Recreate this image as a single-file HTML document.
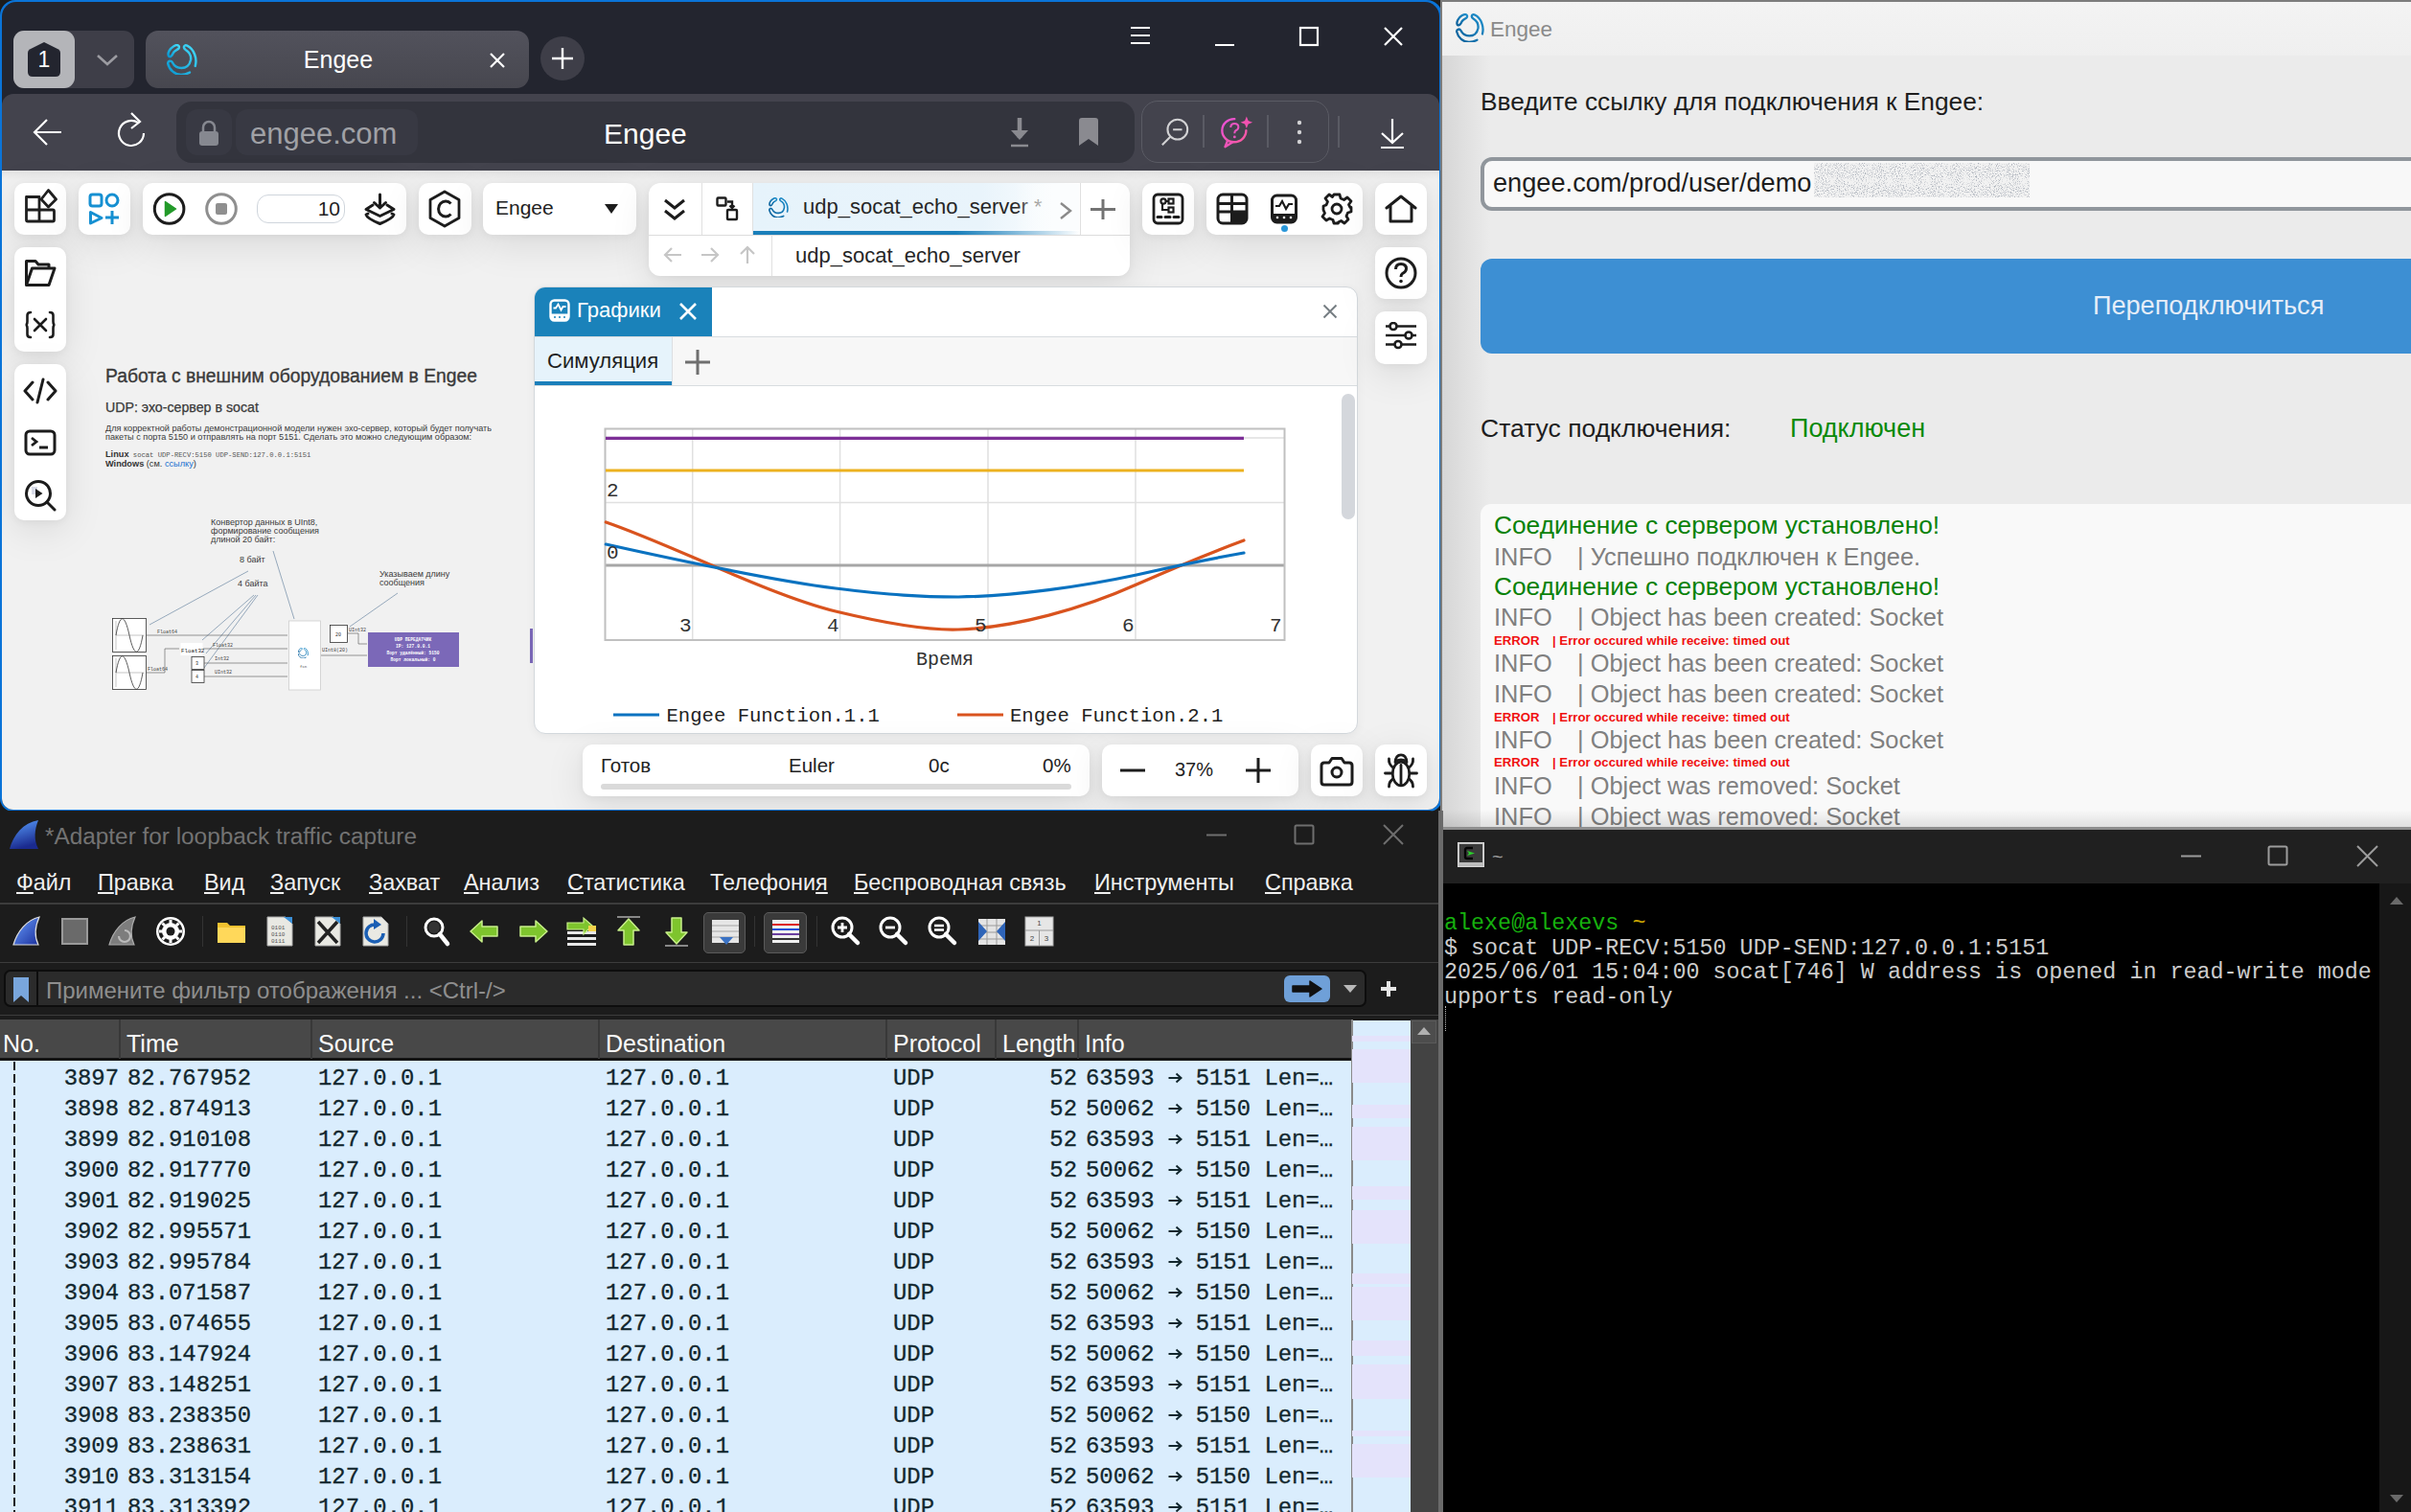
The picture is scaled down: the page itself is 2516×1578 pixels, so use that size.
<!DOCTYPE html>
<html><head><meta charset="utf-8">
<style>
*{margin:0;padding:0;box-sizing:border-box}
html,body{width:2516px;height:1578px;overflow:hidden;background:#1c1c1c;font-family:"Liberation Sans",sans-serif}
.a{position:absolute}
.mono{font-family:"Liberation Mono",monospace}
.ws{-webkit-text-stroke:0.3px #12272e}
.nw{white-space:nowrap}
.wbox{position:absolute;background:#fff;border-radius:10px;box-shadow:0 10px 40px rgba(0,0,0,0.10),0 2px 8px rgba(0,0,0,0.05)}
</style></head><body>

<!-- ============ BROWSER ============ -->
<div id="browser" class="a" style="left:0;top:0;width:1505px;height:847px;background:#0a74d8;border-radius:16px 16px 14px 14px;overflow:hidden">
  <div class="a" style="left:2px;top:2px;width:1500px;height:843px;background:#23252f;border-radius:15px 15px 12px 12px;overflow:hidden"><div class="a" style="left:-2px;top:-2px;width:1505px;height:847px">

    <!-- tab bar -->
    <svg width="0" height="0" style="position:absolute"><defs>
      <linearGradient id="lg1" x1="0" y1="1" x2="1" y2="0"><stop offset="0" stop-color="#0896d0"/><stop offset="1" stop-color="#45dcfa"/></linearGradient>
      <linearGradient id="lg2" x1="0" y1="1" x2="1" y2="0"><stop offset="0" stop-color="#0d5f99"/><stop offset="1" stop-color="#1d8fcc"/></linearGradient>
      <symbol id="elogo" viewBox="0 0 32 32" overflow="visible"><g fill="none" stroke-width="2.3" stroke-linecap="round" stroke-linejoin="round" transform="translate(16 16) scale(1.06) translate(-16 -16)">
        <path d="M2.8 12.8 C1.2 10 4 5.2 7.8 3 C11 1 14 2.2 12.8 5 C12.2 6.2 9.2 6.8 7.6 9.2 C6.4 11.8 4.6 14.6 2.8 12.8 Z"/>
        <path d="M29 22.5 C31 15 28 6 21 2.5 C18 1 16.5 4.5 19.5 6.5 C23.5 9 25 13 24.5 16.5 C23.5 22 19.5 24.5 15.5 24.5 C11 24.5 8 22 6.5 19 C5 16.5 2 17.5 2 20 C3.5 26.5 9 31 15 31 C18.5 31 21 30 23.5 28.8"/>
      </g></symbol>
    </defs></svg>
    <div class="a" style="left:14px;top:32px;width:126px;height:60px;background:#3e3e48;border-radius:11px"></div>
    <div class="a" style="left:14px;top:32px;width:64px;height:60px;background:#b4b5b9;border-radius:11px"></div>
    <svg class="a" style="left:28px;top:43px" width="36" height="38" viewBox="0 0 36 38"><path d="M18 1 L33 8.5 Q35 9.5 35 12 L35 32 Q35 37 30 37 L6 37 Q1 37 1 32 L1 12 Q1 9.5 3 8.5 Z" fill="#23252f"/><text x="18" y="27" text-anchor="middle" font-family="Liberation Sans" font-size="23" fill="#fff">1</text></svg>
    <svg class="a" style="left:99px;top:55px" width="26" height="16" viewBox="0 0 26 16"><path d="M3 3 L13 12 L23 3" stroke="#9b9ba1" stroke-width="2.6" fill="none"/></svg>
    <div class="a" style="left:152px;top:32px;width:400px;height:60px;background:linear-gradient(#52525c,#47474f);border-radius:13px"></div>
    <svg class="a" style="left:174px;top:46px;stroke:url(#lg1)" width="32" height="32"><use href="#elogo"/></svg>
    <div class="a nw" style="left:272px;top:47px;width:162px;text-align:center;font-size:25px;line-height:30px;color:#fff">Engee</div>
    <svg class="a" style="left:509px;top:53px" width="20" height="20" viewBox="0 0 20 20"><path d="M3 3 L17 17 M17 3 L3 17" stroke="#fff" stroke-width="2.2"/></svg>
    <div class="a" style="left:564px;top:38px;width:46px;height:46px;background:#3e3e48;border-radius:50%"></div>
    <svg class="a" style="left:575px;top:49px" width="24" height="24" viewBox="0 0 24 24"><path d="M12 1 V23 M1 12 H23" stroke="#fff" stroke-width="2.4"/></svg>
    <!-- window controls -->
    <svg class="a" style="left:1178px;top:26px" width="24" height="22" viewBox="0 0 24 22"><path d="M2 3 H22 M2 11 H22 M2 19 H22" stroke="#fff" stroke-width="2"/></svg>
    <svg class="a" style="left:1266px;top:40px" width="24" height="10" viewBox="0 0 24 10"><path d="M2 7 H22" stroke="#fff" stroke-width="2.2"/></svg>
    <svg class="a" style="left:1354px;top:26px" width="24" height="24" viewBox="0 0 24 24"><rect x="3" y="3" width="18" height="18" stroke="#fff" stroke-width="2.2" fill="none"/></svg>
    <svg class="a" style="left:1442px;top:26px" width="24" height="24" viewBox="0 0 24 24"><path d="M3 3 L21 21 M21 3 L3 21" stroke="#fff" stroke-width="2.2"/></svg>


    <!-- address row -->
    <div class="a" style="left:2px;top:98px;width:1500px;height:80px;background:#43434d;border-radius:12px 12px 0 0"></div>
    <svg class="a" style="left:32px;top:122px" width="34" height="32" viewBox="0 0 34 32"><path d="M4 16 H32 M17 3 L4 16 L17 29" stroke="#fff" stroke-width="2.2" fill="none"/></svg>
    <svg class="a" style="left:120px;top:116px" width="36" height="40" viewBox="0 0 36 40"><path d="M24 10 A13 13 0 1 0 30 21" stroke="#fff" stroke-width="2.2" fill="none" transform="translate(0,2)"/><path d="M17 2 L26 11 L17 18" stroke="#fff" stroke-width="2.2" fill="none"/></svg>
    <div class="a" style="left:184px;top:106px;width:1000px;height:64px;background:#33343d;border-radius:16px"></div>
    <div class="a" style="left:194px;top:114px;width:48px;height:48px;background:#383943;border-radius:12px"></div>
    <svg class="a" style="left:206px;top:124px" width="24" height="30" viewBox="0 0 24 30"><path d="M6 13 V9 A6 6 0 0 1 18 9 V13" stroke="#868890" stroke-width="2.5" fill="none"/><rect x="2" y="13" width="20" height="15" rx="3" fill="#868890"/></svg>
    <div class="a" style="left:246px;top:114px;width:190px;height:48px;background:#383943;border-radius:12px"></div>
    <div class="a nw" style="left:261px;top:122px;font-size:31px;line-height:36px;color:#a0a1a6">engee.com</div>
    <div class="a nw" style="left:630px;top:122px;font-size:30px;line-height:36px;color:#fff">Engee</div>
    <svg class="a" style="left:1050px;top:120px" width="28" height="36" viewBox="0 0 28 36"><path d="M14 3 V24" stroke="#8a8a90" stroke-width="4.5"/><path d="M5 16 L14 26 L23 16 Z" fill="#8a8a90"/><path d="M5 32 H23" stroke="#8a8a90" stroke-width="2.5"/></svg>
    <svg class="a" style="left:1123px;top:122px" width="26" height="32" viewBox="0 0 26 32"><path d="M3 4 Q3 1 6 1 H20 Q23 1 23 4 V30 L13 23 L3 30 Z" fill="#8a8a90"/></svg>
    <div class="a" style="left:1191px;top:105px;width:196px;height:65px;border:1.5px solid #5a5b64;border-radius:17px"></div>
    <svg class="a" style="left:1210px;top:122px" width="32" height="32" viewBox="0 0 34 34"><circle cx="20" cy="14" r="11" stroke="#d2d2d4" stroke-width="2.2" fill="none"/><path d="M15 14 H25 M12 22 L3 31" stroke="#d2d2d4" stroke-width="2.2"/></svg>
    <div class="a" style="left:1255px;top:120px;width:1.5px;height:34px;background:#5a5b64"></div>
    <svg class="a" style="left:1273px;top:121px" width="36" height="34" viewBox="0 0 40 38"><defs><linearGradient id="aig" x1="0" y1="0" x2="1" y2="1"><stop offset="0" stop-color="#e650d8"/><stop offset="1" stop-color="#ff5aa0"/></linearGradient></defs><path d="M30.5 17 A14 13.5 0 1 1 17 3.5" fill="none" stroke="url(#aig)" stroke-width="2.6" stroke-linecap="round"/><path d="M9 28.5 L6 36 L15 30.5" fill="none" stroke="#ee55b8" stroke-width="2.6" stroke-linejoin="round"/><path d="M12.5 13.5 Q12.5 9 17 9 Q21.5 9 21.5 13 Q21.5 15.5 18.5 17 Q17 18 17 20.5" fill="none" stroke="#e855c0" stroke-width="2.3"/><circle cx="17" cy="24.5" r="1.6" fill="#e855c0"/><path d="M31 0.5 L33 5.5 L38 7.5 L33 9.5 L31 14.5 L29 9.5 L24 7.5 L29 5.5 Z" fill="#f052b0"/></svg>
    <div class="a" style="left:1322px;top:120px;width:1.5px;height:34px;background:#5a5b64"></div>
    <svg class="a" style="left:1350px;top:122px" width="12" height="32" viewBox="0 0 12 32"><circle cx="6" cy="6" r="2.2" fill="#d2d2d4"/><circle cx="6" cy="16" r="2.2" fill="#d2d2d4"/><circle cx="6" cy="26" r="2.2" fill="#d2d2d4"/></svg>
    <div class="a" style="left:1396px;top:121px;width:1.5px;height:33px;background:#5a5b64"></div>
    <svg class="a" style="left:1438px;top:122px" width="30" height="34" viewBox="0 0 30 34"><path d="M15 2 V27 M4 17 L15 27 L26 17" stroke="#fff" stroke-width="2.2" fill="none"/><path d="M3 32 H27" stroke="#fff" stroke-width="2.2"/></svg>

    <!-- app content -->
    <div id="app" class="a" style="left:2px;top:178px;width:1500px;height:667px;background:#f1f1f1"></div>
    <!-- top shadow under address bar -->
    <div class="a" style="left:2px;top:178px;width:1500px;height:10px;background:linear-gradient(rgba(0,0,0,0.06),rgba(0,0,0,0))"></div>
    <!-- toolbar boxes -->
    <div class="wbox" style="left:15px;top:191px;width:54px;height:54px"></div>
    <svg class="a" style="left:25px;top:197px" width="36" height="36" viewBox="0 0 36 36"><g fill="none" stroke="#1f1f1f" stroke-width="2.8" stroke-linejoin="round"><path d="M2.5 8.5 H16 V22 H2.5 Z M2.5 22 H16 V34 H4 Q2.5 34 2.5 32.5 Z M16 22 H30 Q31.5 22 31.5 23.5 V32.5 Q31.5 34 30 34 H16 Z"/><path d="M25.5 1.5 L33.5 11 L25.5 19 L18 11 Z"/></g></svg>
    <div class="wbox" style="left:82px;top:191px;width:54px;height:54px"></div>
    <svg class="a" style="left:92px;top:201px" width="34" height="34" viewBox="0 0 34 34"><g fill="none" stroke="#1690d2" stroke-width="3"><rect x="2" y="2" width="12" height="12" rx="2.5"/><circle cx="25" cy="8" r="6"/><path d="M2.5 20.5 V32 L14 26.5 Z" stroke-linejoin="round"/><path d="M25 19 V33 M18 26 H32"/></g></svg>
    <div class="wbox" style="left:149px;top:191px;width:275px;height:54px"></div>
    <svg class="a" style="left:159px;top:200px" width="36" height="36" viewBox="0 0 36 36"><circle cx="17.6" cy="18" r="15.3" stroke="#1c1c1c" stroke-width="3" fill="none"/><path d="M13.5 10.5 L24.5 18 L13.5 25.5 Z" fill="#239a2a" stroke="#239a2a" stroke-width="1.5" stroke-linejoin="round"/></svg>
    <svg class="a" style="left:213px;top:200px" width="36" height="36" viewBox="0 0 36 36"><circle cx="18" cy="18" r="15.3" stroke="#8f8f8f" stroke-width="3" fill="none"/><rect x="12" y="12" width="12" height="12" rx="2" fill="#8f8f8f"/></svg>
    <div class="a" style="left:268px;top:203px;width:92px;height:30px;border:1px solid #cfd5dc;border-radius:12px"></div>
    <div class="a nw" style="left:268px;top:205px;width:87px;text-align:right;font-size:21px;line-height:26px;color:#222">10</div>
    <svg class="a" style="left:379px;top:201px" width="36" height="36" viewBox="0 0 36 36"><g fill="none" stroke="#1c1c1c" stroke-width="3" stroke-linejoin="round" stroke-linecap="round"><path d="M17.5 2 V16 M11.5 10.5 L17.5 16 L23.5 10.5"/><path d="M10 13 L3 17.5 L17.5 24.5 L32 17.5 L25 13"/><path d="M5 22 L3 23 Q4 27 17.5 32.5 Q31 27 32 23 L30 22"/></g></svg>
    <div class="wbox" style="left:437px;top:191px;width:55px;height:54px"></div>
    <svg class="a" style="left:445px;top:198px" width="38" height="40" viewBox="0 0 38 40"><path d="M19 2 L34 10.5 V29.5 L19 38 L4 29.5 V10.5 Z" fill="none" stroke="#1c1c1c" stroke-width="2.8" stroke-linejoin="round"/><path d="M25.5 14.5 A7.5 8 0 1 0 25.5 25.5" fill="none" stroke="#1c1c1c" stroke-width="3"/></svg>
    <div class="wbox" style="left:504px;top:191px;width:160px;height:54px"></div>
    <div class="a nw" style="left:517px;top:204px;font-size:21px;line-height:26px;color:#222">Engee</div>
    <svg class="a" style="left:630px;top:212px" width="16" height="12" viewBox="0 0 16 12"><path d="M1 1 H15 L8 11 Z" fill="#1c1c1c"/></svg>
    <!-- tabs box -->
    <div class="wbox" style="left:677px;top:191px;width:502px;height:97px;border-radius:12px;overflow:hidden">
      <div class="a" style="left:109px;top:0;width:341px;height:54px;background:linear-gradient(90deg,#e6f3fb 0%,#e9f4fb 70%,#ffffff 100%)"></div>
      <div class="a" style="left:109px;top:50px;width:341px;height:4px;background:linear-gradient(90deg,#1a7fba 0%,#1a7fba 62%,rgba(26,127,186,0) 100%)"></div>
      <div class="a" style="left:0;top:54px;width:502px;height:1px;background:#dcdcdc"></div>
      <div class="a" style="left:55px;top:0;width:1px;height:54px;background:#e0e0e0"></div>
      <div class="a" style="left:108px;top:0;width:1px;height:54px;background:#e0e0e0"></div>
      <div class="a" style="left:450px;top:0;width:1px;height:54px;background:#e0e0e0"></div>
      <div class="a" style="left:128px;top:54px;width:1px;height:43px;background:#e0e0e0"></div>
    </div>
    <svg class="a" style="left:691px;top:206px" width="26" height="26" viewBox="0 0 26 26"><path d="M3 3 L13 11 L23 3 M3 14 L13 22 L23 14" fill="none" stroke="#1c1c1c" stroke-width="3"/></svg>
    <svg class="a" style="left:747px;top:205px" width="24" height="26" viewBox="0 0 24 26"><g fill="none" stroke="#1c1c1c" stroke-width="2.4"><rect x="1.5" y="1.5" width="9" height="8" rx="1"/><rect x="12" y="14" width="10" height="10" rx="1"/><path d="M12 5.5 H17 V12 M14.5 9.5 L17 12 L19.5 9.5"/></g></svg>
    <svg class="a" style="left:802px;top:206px;stroke:url(#lg2)" width="21" height="21"><use href="#elogo"/></svg>
    <div class="a nw" style="left:838px;top:203px;font-size:22px;line-height:26px;color:#262626">udp_socat_echo_server <span style="color:#333">*</span></div>
    <div class="a" style="left:1060px;top:192px;width:66px;height:48px;background:linear-gradient(90deg,rgba(248,252,254,0),#fbfdfe 60%)"></div>
    <svg class="a" style="left:1102px;top:209px" width="20" height="22" viewBox="0 0 20 22"><path d="M5 3 L15 11 L5 19" fill="none" stroke="#8a8a8a" stroke-width="2.4"/></svg>
    <svg class="a" style="left:1137px;top:207px" width="28" height="24" viewBox="0 0 28 22"><path d="M14 0 V21 M1 10.5 H27" stroke="#737373" stroke-width="3"/></svg>
    <svg class="a" style="left:691px;top:255px" width="22" height="22" viewBox="0 0 22 22"><path d="M20 11 H3 M10 4 L3 11 L10 18" fill="none" stroke="#c6c6c6" stroke-width="2.2"/></svg>
    <svg class="a" style="left:730px;top:255px" width="22" height="22" viewBox="0 0 22 22"><path d="M2 11 H19 M12 4 L19 11 L12 18" fill="none" stroke="#c6c6c6" stroke-width="2.2"/></svg>
    <svg class="a" style="left:769px;top:255px" width="22" height="22" viewBox="0 0 22 22"><path d="M11 20 V3 M4 10 L11 3 L18 10" fill="none" stroke="#c6c6c6" stroke-width="2.2"/></svg>
    <div class="a nw" style="left:830px;top:253.5px;font-size:22px;line-height:26px;color:#262626">udp_socat_echo_server</div>
    <!-- canvas text -->
    <div class="a nw" style="left:110px;top:381px;font-size:19.3px;line-height:24px;color:#3a3a3a;-webkit-text-stroke:0.35px #3a3a3a">Работа с внешним оборудованием в Engee</div>
    <div class="a nw" style="left:110px;top:416px;font-size:14.2px;line-height:18px;color:#3a3a3a;-webkit-text-stroke:0.25px #3a3a3a">UDP: эхо-сервер в socat</div>
    <div class="a nw" style="left:110px;top:443px;font-size:9.15px;line-height:9px;color:#3a3a3a">Для корректной работы демонстрационной модели нужен эхо-сервер, который будет получать<br>пакеты с порта 5150 и отправлять на порт 5151. Сделать это можно следующим образом:</div>
    <div class="a nw" style="left:110px;top:470px;font-size:9.2px;line-height:8.8px;color:#333"><b>Linux</b><span class="mono" style="font-size:7.2px;color:#555">&nbsp;socat UDP-RECV:5150 UDP-SEND:127.0.0.1:5151</span><br><b>Windows</b> (см. <span style="color:#1a6fd0">ссылку</span>)</div>
    <!-- diagram -->
    <svg class="a" style="left:100px;top:530px" width="460" height="200" viewBox="100 530 460 200">
      <g font-family="Liberation Sans" font-size="9" fill="#3a3a3a">
        <text x="220" y="548">Конвертор данных в UInt8,</text>
        <text x="220" y="557">формирование сообщения</text>
        <text x="220" y="566">длиной 20 байт:</text>
        <text x="250" y="587">8 байт</text>
        <text x="248" y="612">4 байта</text>
        <text x="396" y="602">Указываем длину</text>
        <text x="396" y="611">сообщения</text>
      </g>
      <g stroke="#7d96ad" stroke-width="0.8" fill="none">
        <path d="M259 596 L156 652"/>
        <path d="M265 621 L211 668 M267 621 L215 682 M269 621 L213 697"/>
        <path d="M285 575 L307 646"/>
        <path d="M415 619 L365 654"/>
      </g>
      <g fill="#fff" stroke="#333" stroke-width="0.8">
        <rect x="117.5" y="645.5" width="35" height="35"/>
        <rect x="117.5" y="684.5" width="35" height="35"/>
        <rect x="188.5" y="671" width="23" height="13" stroke="none"/>
        <rect x="200" y="685.5" width="13" height="13"/>
        <rect x="200" y="699.5" width="13" height="13"/>
        <rect x="301.5" y="648" width="33" height="72" stroke="#ccc"/>
        <rect x="344.5" y="652.5" width="18" height="18"/>
      </g>
      <g stroke="#888" stroke-width="0.5"><path d="M121 663 H150 M121 702 H150"/><path d="M121 648 V678 M121 687 V717"/></g>
      <path d="M121 663 C125 640 130 640 135 663 C140 686 145 686 149 663" stroke="#333" stroke-width="0.8" fill="none"/>
      <path d="M121 702 C125 679 130 679 135 702 C140 725 145 725 149 702" stroke="#333" stroke-width="0.8" fill="none"/>
      <g stroke="#555" stroke-width="0.6" fill="none">
        <path d="M153 663 H300"/><path d="M212 677 H300"/><path d="M213 692 H300"/><path d="M213 706 H300"/>
        <path d="M153 702 H172 V677 H187"/><path d="M335 684 H383"/><path d="M363 661 H374 V672 H383"/>
      </g>
      <rect x="384" y="660" width="95" height="36" fill="#7b68b8"/>
      <g font-family="Liberation Mono" font-size="4.6" fill="#fff" text-anchor="middle" font-weight="bold">
        <text x="431" y="669">UDP ПЕРЕДАТЧИК</text><text x="431" y="676">IP: 127.0.0.1</text><text x="431" y="683">Порт удалённый: 5150</text><text x="431" y="690">Порт локальный: 0</text>
      </g>
      <g font-family="Liberation Mono" font-size="5" fill="#444">
        <text x="164" y="661">Float64</text><text x="222" y="675">Float32</text><text x="224" y="689">Int32</text><text x="224" y="703">UInt32</text>
        <text x="154" y="700">Float64</text><text x="336" y="680">UInt8(20)</text><text x="364" y="659">UInt32</text>
        <text x="189" y="681" font-size="5.8" fill="#222">Float32</text><text x="204" y="694" fill="#333">3</text><text x="204" y="708" fill="#333">4</text><text x="350" y="664" fill="#333">20</text>
        <text x="313" y="697" font-size="4">fcn</text>
      </g>
      <svg x="311" y="676" width="11" height="11" style="stroke:url(#lg2)"><use href="#elogo"/></svg>
      <rect x="553" y="656" width="3" height="36" fill="#7b68b8"/>
    </svg>
    <!-- graphs panel -->
    <div class="a" style="left:557px;top:299px;width:860px;height:467px;background:#fff;border:1px solid #d3d8dc;border-radius:12px;box-shadow:0 2px 10px rgba(0,0,0,0.05);overflow:hidden">
      <div class="a" style="left:-1px;top:-1px;width:186px;height:52px;background:#1a82ba"></div>
      <div class="a" style="left:-1px;top:51px;width:859px;height:1px;background:#d8dcdf"></div>
      <div class="a" style="left:-1px;top:52px;width:859px;height:50px;background:#f7f7f7"></div>
      <div class="a" style="left:-1px;top:52px;width:145px;height:50px;background:#e6f3fb"></div>
      <div class="a" style="left:-1px;top:98px;width:145px;height:4px;background:#1a7fba"></div>
      <div class="a" style="left:143px;top:52px;width:1px;height:50px;background:#dcdfe2"></div>
      <div class="a" style="left:-1px;top:102px;width:859px;height:1px;background:#d8dcdf"></div>
      <div class="a" style="left:842px;top:111px;width:14px;height:131px;background:#d4d7dc;border-radius:7px"></div>
    </div>
    <svg class="a" style="left:573px;top:312px" width="22" height="24" viewBox="0 0 22 24"><rect x="1.5" y="1.5" width="19" height="21" rx="4" fill="none" stroke="#fff" stroke-width="2.4"/><path d="M1.5 15.5 H20.5 V19 Q20.5 22.5 17 22.5 H5 Q1.5 22.5 1.5 19 Z" fill="#fff"/><path d="M4.5 9.5 H7 L9.5 5.5 L12.5 11.5 L14.5 8 H17.5" fill="none" stroke="#fff" stroke-width="1.8"/><circle cx="6" cy="19" r="1" fill="#1a82ba"/><circle cx="11" cy="19" r="1" fill="#1a82ba"/><circle cx="16" cy="19" r="1" fill="#1a82ba"/></svg>
    <div class="a nw" style="left:602px;top:311px;font-size:22.1px;line-height:26px;color:#fff">Графики</div>
    <svg class="a" style="left:708px;top:315px" width="20" height="20" viewBox="0 0 20 20"><path d="M2 2 L18 18 M18 2 L2 18" stroke="#fff" stroke-width="2.6"/></svg>
    <svg class="a" style="left:1380px;top:317px" width="16" height="16" viewBox="0 0 16 16"><path d="M1.5 1.5 L14.5 14.5 M14.5 1.5 L1.5 14.5" stroke="#737b80" stroke-width="1.8"/></svg>
    <div class="a nw" style="left:571px;top:364px;font-size:22.1px;line-height:26px;color:#1f1f1f">Симуляция</div>
    <svg class="a" style="left:714px;top:364px" width="28" height="28" viewBox="0 0 28 28"><path d="M14 1 V27 M1 14 H27" stroke="#6f6f6f" stroke-width="3"/></svg>
    <!-- plot -->
    <svg class="a" style="left:620px;top:440px" width="740" height="320" viewBox="620 440 740 320">
      <g stroke="#e0e0e0" stroke-width="1.5"><path d="M722.7 447 V668 M876.6 447 V668 M1031 447 V668 M1185 447 V668 M631 457 H1341 M631 524.5 H1341"/></g>
      <path d="M631 590 H1341" stroke="#a6a6a6" stroke-width="3"/>
      <rect x="631.5" y="447.5" width="709" height="220.5" fill="none" stroke="#c0c0c0" stroke-width="2"/>
      <path d="M632 457.3 H1298" stroke="#7d2f97" stroke-width="3.2"/>
      <path d="M632 491 H1298" stroke="#ecb120" stroke-width="3.2"/>
      <path d="M632.3 545 C 700 568, 800 620, 872 638 C 930 652, 970 658, 1000 657 C 1060 655, 1130 635, 1186 610 C 1220 595, 1260 578, 1298 564" fill="none" stroke="#d9531e" stroke-width="3.2" stroke-linecap="round"/>
      <path d="M632.3 568 C 700 583, 800 605, 872 614 C 930 621, 960 623, 1000 623 C 1060 622, 1130 612, 1186 600 C 1230 590, 1270 582, 1298 577" fill="none" stroke="#0a72c0" stroke-width="3.2" stroke-linecap="round"/>
      <g font-family="Liberation Mono" font-size="21" fill="#333">
        <text x="633" y="517.5">2</text><text x="633" y="583">0</text>
        <text x="709" y="658.5">3</text><text x="863" y="658.5">4</text><text x="1017" y="658.5">5</text><text x="1171" y="658.5">6</text><text x="1325" y="658.5">7</text>
        <text x="956" y="694" font-size="20">Время</text>
      </g>
      <path d="M640 746 H688" stroke="#0a72c0" stroke-width="3"/>
      <path d="M999 746 H1047" stroke="#d9531e" stroke-width="3"/>
      <g font-family="Liberation Mono" font-size="20.6" fill="#222"><text x="695.5" y="753">Engee Function.1.1</text><text x="1054" y="753">Engee Function.2.1</text></g>
    </svg>
    <!-- status bar -->
    <div class="wbox" style="left:608px;top:777px;width:529px;height:54px"></div>
    <div class="a nw" style="left:627px;top:786px;font-size:20.5px;line-height:26px;color:#222">Готов</div>
    <div class="a nw" style="left:823px;top:786px;font-size:20.5px;line-height:26px;color:#222">Euler</div>
    <div class="a nw" style="left:969px;top:786px;font-size:20.5px;line-height:26px;color:#222">0с</div>
    <div class="a nw" style="left:1088px;top:786px;font-size:20.5px;line-height:26px;color:#222">0%</div>
    <div class="a" style="left:627px;top:818px;width:491px;height:6px;background:#dadada;border-radius:3px"></div>
    <div class="wbox" style="left:1150px;top:777px;width:205px;height:54px"></div>
    <svg class="a" style="left:1168px;top:796px" width="28" height="16" viewBox="0 0 28 16"><path d="M1 8 H27" stroke="#1c1c1c" stroke-width="3"/></svg>
    <div class="a nw" style="left:1226px;top:790px;font-size:20px;line-height:26px;color:#222">37%</div>
    <svg class="a" style="left:1299px;top:790px" width="28" height="28" viewBox="0 0 28 28"><path d="M14 1 V27 M1 14 H27" stroke="#1c1c1c" stroke-width="3"/></svg>
    <div class="wbox" style="left:1368px;top:777px;width:54px;height:54px"></div>
    <svg class="a" style="left:1376px;top:789px" width="38" height="32" viewBox="0 0 38 32"><path d="M3 10 Q3 7 6 7 H11 L14 2.5 H24 L27 7 H32 Q35 7 35 10 V27 Q35 30 32 30 H6 Q3 30 3 27 Z" fill="none" stroke="#1c1c1c" stroke-width="3" stroke-linejoin="round"/><circle cx="19" cy="17" r="5" fill="none" stroke="#1c1c1c" stroke-width="3"/></svg>
    <div class="wbox" style="left:1435px;top:777px;width:54px;height:54px"></div>
    <svg class="a" style="left:1443px;top:786px" width="38" height="38" viewBox="0 0 38 38"><g fill="none" stroke="#1c1c1c" stroke-width="2.8" stroke-linecap="round"><ellipse cx="19" cy="21.5" rx="8.8" ry="12.3"/><path d="M13 9.5 Q13.5 1.8 19 1.8 Q24.5 1.8 25 9.5"/><path d="M13.5 8.5 Q19 5.5 24.5 8.5"/><path d="M19 12.5 V33"/><path d="M6.5 6 Q6 11 10 14.5"/><path d="M31.5 6 Q32 11 28 14.5"/><path d="M2.5 21 H10"/><path d="M28 21 H35.5"/><path d="M6.5 35 Q6.5 30 10 27.5"/><path d="M31.5 35 Q31.5 30 28 27.5"/></g></svg>
    <!-- right toolbar -->
    <div class="wbox" style="left:1192px;top:191px;width:54px;height:54px"></div>
    <svg class="a" style="left:1202px;top:201px" width="34" height="34" viewBox="0 0 34 34"><g fill="none" stroke="#1c1c1c" stroke-width="2.8"><rect x="2" y="2" width="30" height="30" rx="4"/><circle cx="12" cy="9" r="2.6" stroke-width="2.2"/><rect x="17.5" y="6.5" width="5" height="5" stroke-width="2.2"/><rect x="17.5" y="15.5" width="5" height="5" stroke-width="2.2"/><path d="M14.5 9 H17.5 M11 11.5 V18 H17.5" stroke-width="2.2"/><path d="M6 25.5 H10 M14 25.5 H19 M23 25.5 H28" stroke-width="3" stroke-linecap="round"/></g></svg>
    <div class="wbox" style="left:1259px;top:191px;width:163px;height:54px"></div>
    <svg class="a" style="left:1269px;top:201px" width="34" height="34" viewBox="0 0 34 34"><rect x="2" y="2" width="30" height="30" rx="5" fill="none" stroke="#1c1c1c" stroke-width="3"/><path d="M2 11.5 H32 M2 20 H32 M16.5 2 V32" stroke="#1c1c1c" stroke-width="3"/><path d="M16.5 20 H32 V27 Q32 32 27 32 H16.5 Z" fill="#1c1c1c"/></svg>
    <svg class="a" style="left:1325px;top:202px" width="30" height="32" viewBox="0 0 30 32"><rect x="2.5" y="2" width="25" height="28" rx="5" fill="none" stroke="#1c1c1c" stroke-width="3"/><path d="M2.5 21 H27.5 V25 Q27.5 30 22.5 30 H7.5 Q2.5 30 2.5 25 Z" fill="#1c1c1c"/><path d="M6 13 L10 13 L13 8 L17 16 L20 11 H24" fill="none" stroke="#1c1c1c" stroke-width="2.2"/><circle cx="8" cy="25" r="1.3" fill="#fff"/><circle cx="15" cy="25" r="1.3" fill="#fff"/><circle cx="22" cy="25" r="1.3" fill="#fff"/></svg>
    <div class="a" style="left:1337px;top:235px;width:7px;height:7px;border-radius:50%;background:#2a97d9"></div>
    <svg class="a" style="left:1378px;top:201px" width="34" height="34" viewBox="0 0 34 34"><g transform="translate(17 17)"><path d="M-3 -15 H3 L4 -11 L7.5 -9.5 L11 -12 L15 -8 L12.5 -4.5 L14 -1.5 L15 -1.5 V 3 L11.5 4 L10 7.5 L12 11 L8 15 L4.5 12.5 L1.5 14 L1.5 15 H-3 L-4 11.5 L-7.5 10 L-11 12 L-15 8 L-12.5 4.5 L-14 1 V-3 L-11 -4 L-9.5 -7.5 L-12 -11 L-8 -15 L-4.5 -12.5 Z" fill="none" stroke="#1c1c1c" stroke-width="2.8" stroke-linejoin="round"/><circle r="5" fill="none" stroke="#1c1c1c" stroke-width="2.8"/></g></svg>
    <div class="wbox" style="left:1435px;top:191px;width:54px;height:54px"></div>
    <svg class="a" style="left:1445px;top:202px" width="34" height="32" viewBox="0 0 34 32"><path d="M2 15 L17 3 L32 15 M6 13 V29 H28 V13" fill="none" stroke="#1c1c1c" stroke-width="3" stroke-linejoin="round" stroke-linecap="round"/></svg>
    <div class="wbox" style="left:1435px;top:258px;width:54px;height:54px"></div>
    <svg class="a" style="left:1445px;top:268px" width="34" height="34" viewBox="0 0 34 34"><circle cx="17" cy="17" r="15" fill="none" stroke="#1c1c1c" stroke-width="3"/><path d="M11.5 13 Q11.5 7.5 17 7.5 Q22.5 7.5 22.5 12.5 Q22.5 15.5 18.5 17.5 Q17 18.5 17 21" fill="none" stroke="#1c1c1c" stroke-width="3"/><circle cx="17" cy="25.5" r="1.8" fill="#1c1c1c"/></svg>
    <div class="wbox" style="left:1435px;top:325px;width:54px;height:55px"></div>
    <svg class="a" style="left:1444px;top:336px" width="36" height="34" viewBox="0 0 36 34"><g fill="none" stroke="#1c1c1c" stroke-width="2.6"><path d="M2 4.5 H6.5 M14 4.5 H34 M2 14 H22 M29.5 14 H34 M2 23.5 H11 M18.5 23.5 H34"/><circle cx="10" cy="4.5" r="3.5"/><circle cx="26" cy="14" r="3.5"/><circle cx="15" cy="23.5" r="3.5"/></g></svg>
    <!-- left sidebar -->
    <div class="wbox" style="left:15px;top:258px;width:54px;height:109px"></div>
    <svg class="a" style="left:25px;top:270px" width="34" height="30" viewBox="0 0 34 30"><path d="M2.5 27.5 V2.5 H12 L15 6 H26 V10 M2.5 27.5 H26 L32 10 H8.5 Z" fill="none" stroke="#1c1c1c" stroke-width="3" stroke-linejoin="round"/></svg>
    <svg class="a" style="left:25px;top:324px" width="34" height="30" viewBox="0 0 34 30"><g fill="none" stroke="#1c1c1c" stroke-width="2.6" stroke-linecap="round"><path d="M7 2 Q3.5 2 3.5 5 V11.5 Q3.5 15 1.5 15 Q3.5 15 3.5 18.5 V25 Q3.5 28 7 28"/><path d="M27 2 Q30.5 2 30.5 5 V11.5 Q30.5 15 32.5 15 Q30.5 15 30.5 18.5 V25 Q30.5 28 27 28"/><path d="M11 9 L23 21 M23 9 L11 21"/></g></svg>
    <div class="wbox" style="left:15px;top:380px;width:54px;height:163px"></div>
    <svg class="a" style="left:24px;top:394px" width="36" height="28" viewBox="0 0 36 28"><path d="M10 5 L2 14 L10 23 M26 5 L34 14 L26 23 M21 2 L15 26" fill="none" stroke="#1c1c1c" stroke-width="3" stroke-linecap="round" stroke-linejoin="round"/></svg>
    <svg class="a" style="left:25px;top:448px" width="34" height="28" viewBox="0 0 34 28"><rect x="2" y="2" width="30" height="24" rx="4" fill="none" stroke="#1c1c1c" stroke-width="3"/><path d="M8 9 L13 13 L8 17 M16 19 H25" fill="none" stroke="#1c1c1c" stroke-width="2.8"/></svg>
    <svg class="a" style="left:25px;top:500px" width="34" height="34" viewBox="0 0 34 34"><circle cx="15" cy="15" r="12.5" fill="none" stroke="#1c1c1c" stroke-width="3"/><path d="M24 24 L32 32" stroke="#1c1c1c" stroke-width="3" stroke-linecap="round"/><rect x="8" y="8" width="6" height="8" fill="#d8dbe8"/><path d="M12 10 L19.5 15 L12 20 Z" fill="#1c1c1c"/></svg>

  </div></div>
</div>

<!-- ============ CONNECTOR APP ============ -->
<div id="conn" class="a" style="left:1503px;top:0;width:1013px;height:866px;background:#ebebeb;overflow:hidden">
  <div class="a" style="left:0;top:0;width:3px;height:866px;background:#7c7c7c"></div>
  <div class="a" style="left:0;top:0;width:1013px;height:2px;background:#7c7c7c"></div>
  <div class="a" style="left:2px;top:2px;width:1011px;height:56px;background:linear-gradient(#f3f3f3,#efefef)"></div>
  <div class="a" style="left:2px;top:58px;width:50px;height:808px;background:linear-gradient(90deg,#d6d6d6,rgba(235,235,235,0))"></div>
</div>
<div id="connc" class="a" style="left:0;top:0;width:2516px;height:866px;overflow:hidden;pointer-events:none">
  <svg class="a" style="left:1519px;top:14px;stroke:url(#lg2)" width="30" height="30"><use href="#elogo"/></svg>
  <div class="a nw" style="left:1555px;top:18px;font-size:22.5px;line-height:26px;color:#8a8a8a">Engee</div>
  <div class="a nw" style="left:1545px;top:90px;font-size:26.3px;line-height:32px;color:#1e1e1e">Введите ссылку для подключения к Engee:</div>
  <div class="a" style="left:1545px;top:164px;width:1000px;height:56px;background:#f8f8f8;border:4px solid #90969c;border-radius:12px"></div>
  <div class="a nw" style="left:1558px;top:175px;font-size:27.2px;line-height:32px;color:#1e1e1e">engee.com/prod/user/demo</div>
  <svg class="a" style="left:1893px;top:170px" width="225" height="36"><filter id="nz" x="0" y="0" width="100%" height="100%"><feTurbulence type="fractalNoise" baseFrequency="0.95" numOctaves="2" seed="7"/><feColorMatrix values="0 0 0 0 0.42  0 0 0 0 0.45  0 0 0 0 0.5  0 0 0 4 -2.05"/></filter><rect width="225" height="36" fill="#f2f2f2"/><rect width="225" height="36" filter="url(#nz)"/></svg>
  <div class="a" style="left:1545px;top:270px;width:1000px;height:99px;background:#3d8fd3;border-radius:12px"></div>
  <div class="a nw" style="left:2184px;top:303px;font-size:27.1px;line-height:32px;color:#e6eef8">Переподключиться</div>
  <div class="a nw" style="left:1545px;top:431px;font-size:26.5px;line-height:32px;color:#1e1e1e">Статус подключения:</div>
  <div class="a nw" style="left:1868px;top:431px;font-size:27px;line-height:32px;color:#0a8a0a">Подключен</div>
  <div class="a" style="left:1545px;top:526px;width:1000px;height:400px;background:#f9f9f9;border-radius:11px"></div>
<div class="a nw" style="left:1559px;top:533.0px;font-size:26.3px;line-height:30px;color:#0a820a">Соединение с сервером установлено!</div>
<div class="a nw" style="left:1559px;top:566.0px;font-size:25.4px;line-height:30px;color:#808080">INFO</div><div class="a nw" style="left:1646px;top:566.0px;font-size:25.4px;line-height:30px;color:#808080">| Успешно подключен к Engee.</div>
<div class="a nw" style="left:1559px;top:597.0px;font-size:26.3px;line-height:30px;color:#0a820a">Соединение с сервером установлено!</div>
<div class="a nw" style="left:1559px;top:628.8px;font-size:25.4px;line-height:30px;color:#808080">INFO</div><div class="a nw" style="left:1646px;top:628.8px;font-size:25.4px;line-height:30px;color:#808080">| Object has been created: Socket</div>
<div class="a nw" style="left:1559px;top:660.5px;font-size:13.2px;line-height:16px;font-weight:bold;color:#f01010">ERROR</div><div class="a nw" style="left:1620px;top:660.5px;font-size:13.2px;line-height:16px;font-weight:bold;color:#f01010">| Error occured while receive: timed out</div>
<div class="a nw" style="left:1559px;top:677.0px;font-size:25.4px;line-height:30px;color:#808080">INFO</div><div class="a nw" style="left:1646px;top:677.0px;font-size:25.4px;line-height:30px;color:#808080">| Object has been created: Socket</div>
<div class="a nw" style="left:1559px;top:708.8px;font-size:25.4px;line-height:30px;color:#808080">INFO</div><div class="a nw" style="left:1646px;top:708.8px;font-size:25.4px;line-height:30px;color:#808080">| Object has been created: Socket</div>
<div class="a nw" style="left:1559px;top:740.5px;font-size:13.2px;line-height:16px;font-weight:bold;color:#f01010">ERROR</div><div class="a nw" style="left:1620px;top:740.5px;font-size:13.2px;line-height:16px;font-weight:bold;color:#f01010">| Error occured while receive: timed out</div>
<div class="a nw" style="left:1559px;top:756.5px;font-size:25.4px;line-height:30px;color:#808080">INFO</div><div class="a nw" style="left:1646px;top:756.5px;font-size:25.4px;line-height:30px;color:#808080">| Object has been created: Socket</div>
<div class="a nw" style="left:1559px;top:788.0px;font-size:13.2px;line-height:16px;font-weight:bold;color:#f01010">ERROR</div><div class="a nw" style="left:1620px;top:788.0px;font-size:13.2px;line-height:16px;font-weight:bold;color:#f01010">| Error occured while receive: timed out</div>
<div class="a nw" style="left:1559px;top:804.6px;font-size:25.4px;line-height:30px;color:#808080">INFO</div><div class="a nw" style="left:1646px;top:804.6px;font-size:25.4px;line-height:30px;color:#808080">| Object was removed: Socket</div>
<div class="a nw" style="left:1559px;top:836.5px;font-size:25.4px;line-height:30px;color:#808080">INFO</div><div class="a nw" style="left:1646px;top:836.5px;font-size:25.4px;line-height:30px;color:#808080">| Object was removed: Socket</div>
</div>

<!-- ============ TERMINAL ============ -->
<div class="a" style="left:1506px;top:845px;width:1010px;height:18px;background:linear-gradient(rgba(0,0,0,0),rgba(0,0,0,0.10))"></div>
<div id="term" class="a" style="left:1500px;top:863px;width:1016px;height:715px;background:#000;overflow:hidden">
  <div class="a" style="left:0;top:0;width:6px;height:715px;background:#4a4a4a"></div>
  <div class="a" style="left:6px;top:0;width:1010px;height:3px;background:#8e8e8e"></div>
  <div class="a" style="left:6px;top:3px;width:1010px;height:56px;background:#202020"></div>
  <div class="a" style="left:983px;top:59px;width:33px;height:656px;background:#171717"></div>
</div>
<div class="a" style="left:1521px;top:879px;width:28px;height:26px;background:#bdbdbd;border:1px solid #d8d8d8"></div>
<div class="a" style="left:1523px;top:881px;width:24px;height:19px;background:#3a3a3a"></div>
<svg class="a" style="left:1525px;top:883px" width="20" height="16" viewBox="0 0 20 16"><path d="M12 2 H6 Q4 2 4 4 V11 Q4 13 6 13 H12" fill="none" stroke="#050505" stroke-width="2.4"/><path d="M6 5 L14 7.5 L6 10 L8 7.5 Z" fill="#2bd22b"/></svg>
<div class="a nw" style="left:1557px;top:882px;font-size:20px;line-height:24px;color:#9a9a9a">~</div>
<svg class="a" style="left:2274px;top:882px" width="26" height="24" viewBox="0 0 26 24"><path d="M2 11.5 H23" stroke="#9c9c9c" stroke-width="2"/></svg>
<svg class="a" style="left:2365px;top:881px" width="26" height="26" viewBox="0 0 26 26"><rect x="2.5" y="2.5" width="19" height="19" rx="1.5" fill="none" stroke="#9c9c9c" stroke-width="2"/></svg>
<svg class="a" style="left:2458px;top:881px" width="26" height="26" viewBox="0 0 26 26"><path d="M2 2 L23 23 M23 2 L2 23" stroke="#9c9c9c" stroke-width="2"/></svg>
<svg class="a" style="left:2492px;top:932px" width="18" height="14" viewBox="0 0 18 14"><path d="M2 12 L9 4 L16 12 Z" fill="#6a6a6a"/></svg>
<svg class="a" style="left:2492px;top:1558px" width="18" height="14" viewBox="0 0 18 14"><path d="M2 2 L9 10 L16 2 Z" fill="#6a6a6a"/></svg>
<div class="a nw mono" style="left:1507px;top:952px;font-size:23.38px;line-height:25.7px;color:#cccccc"><span style="color:#16b00e">alexe@alexevs</span> <span style="color:#c8a300">~</span><br>$ socat UDP-RECV:5150 UDP-SEND:127.0.0.1:5151<br>2025/06/01 15:04:00 socat[746] W address is opened in read-write mode<br>upports read-only</div>
<div class="a" style="left:1508px;top:1050px;width:0;height:26px;border-left:1px dotted #bbb"></div>

<!-- ============ WIRESHARK ============ -->
<div id="ws" class="a" style="left:0;top:846px;width:1502px;height:732px;background:#1c1c1c;border-radius:0 10px 0 0;overflow:hidden"></div>
<svg class="a" style="left:8px;top:854px" width="34" height="34" viewBox="0 0 34 34"><defs><linearGradient id="shk2" x1="0" y1="0" x2="0.3" y2="1"><stop offset="0" stop-color="#5aa0ff"/><stop offset="1" stop-color="#1a2a8e"/></linearGradient></defs><path d="M2 32 C 6 17, 16 5, 32 2 C 28 12, 27 22, 32 32 Z" fill="url(#shk2)"/></svg>
<div class="a nw" style="left:47px;top:858px;font-size:24.35px;line-height:30px;color:#737373">*Adapter for loopback traffic capture</div>
<svg class="a" style="left:1258px;top:860px" width="24" height="24" viewBox="0 0 24 24"><path d="M1 11.5 H22" stroke="#6e6e6e" stroke-width="2"/></svg>
<svg class="a" style="left:1349px;top:859px" width="24" height="24" viewBox="0 0 24 24"><rect x="2.5" y="2.5" width="19" height="19" rx="1.5" fill="none" stroke="#6e6e6e" stroke-width="2"/></svg>
<svg class="a" style="left:1442px;top:859px" width="24" height="24" viewBox="0 0 24 24"><path d="M2 2 L22 22 M22 2 L2 22" stroke="#6e6e6e" stroke-width="2"/></svg>
<div class="a nw" style="left:17px;top:906px;font-size:23.4px;line-height:30px;color:#f0f0f0"><u>Ф</u>айл</div><div class="a nw" style="left:102px;top:906px;font-size:23.4px;line-height:30px;color:#f0f0f0"><u>П</u>равка</div><div class="a nw" style="left:213px;top:906px;font-size:23.4px;line-height:30px;color:#f0f0f0"><u>В</u>ид</div><div class="a nw" style="left:282px;top:906px;font-size:23.4px;line-height:30px;color:#f0f0f0"><u>З</u>апуск</div><div class="a nw" style="left:385px;top:906px;font-size:23.4px;line-height:30px;color:#f0f0f0"><u>З</u>ахват</div><div class="a nw" style="left:484px;top:906px;font-size:23.4px;line-height:30px;color:#f0f0f0"><u>А</u>нализ</div><div class="a nw" style="left:592px;top:906px;font-size:23.4px;line-height:30px;color:#f0f0f0"><u>С</u>татистика</div><div class="a nw" style="left:741px;top:906px;font-size:23.4px;line-height:30px;color:#f0f0f0">Телефони<u>я</u></div><div class="a nw" style="left:891px;top:906px;font-size:23.4px;line-height:30px;color:#f0f0f0"><u>Б</u>еспроводная связь</div><div class="a nw" style="left:1142px;top:906px;font-size:23.4px;line-height:30px;color:#f0f0f0"><u>И</u>нструменты</div><div class="a nw" style="left:1320px;top:906px;font-size:23.4px;line-height:30px;color:#f0f0f0"><u>С</u>правка</div>
<div class="a" style="left:0;top:942px;width:1502px;height:1.5px;background:#3c3c3c"></div>
<div class="a" style="left:734px;top:952px;width:44px;height:43px;background:#3a3a3a;border:1.5px solid #5a5a5a;border-radius:5px"></div><div class="a" style="left:797px;top:952px;width:45px;height:43px;background:#3a3a3a;border:1.5px solid #5a5a5a;border-radius:5px"></div>
<svg class="a" style="left:10px;top:954px" width="36" height="36" viewBox="0 0 36 36"><defs><linearGradient id="shk" x1="0" y1="0" x2="1" y2="1"><stop offset="0" stop-color="#6aa0ff"/><stop offset="1" stop-color="#1b2f9c"/></linearGradient></defs><path d="M4 32 C 8 18, 18 6, 31 3 C 27 12, 25 22, 30 32 Z" fill="url(#shk)" stroke="#ddd" stroke-width="1.2"/></svg>
<svg class="a" style="left:60px;top:954px" width="36" height="36" viewBox="0 0 36 36"><rect x="5" y="5" width="26" height="26" fill="#6a6a6a" stroke="#9a9a9a" stroke-width="2"/></svg>
<svg class="a" style="left:110px;top:954px" width="36" height="36" viewBox="0 0 36 36"><path d="M4 32 C 8 18, 18 6, 31 3 C 27 12, 25 22, 30 32 Z" fill="#7d7d7d" stroke="#aaa" stroke-width="1.2"/><path d="M20 17 A6 6 0 1 1 14 23" fill="none" stroke="#bbb" stroke-width="2.2"/></svg>
<svg class="a" style="left:160px;top:954px" width="36" height="36" viewBox="0 0 36 36"><circle cx="18" cy="18" r="15" fill="#fff"/><circle cx="18" cy="18" r="12.5" fill="#1c1c1c"/><circle cx="18" cy="18" r="9" fill="#fff"/><circle cx="18" cy="18" r="4.5" fill="#1c1c1c"/><g stroke="#fff" stroke-width="3"><path d="M18 6 V10 M18 26 V30 M6 18 H10 M26 18 H30 M9.5 9.5 L12 12 M24 24 L26.5 26.5 M9.5 26.5 L12 24 M24 12 L26.5 9.5"/></g></svg>
<svg class="a" style="left:224px;top:954px" width="36" height="36" viewBox="0 0 36 36"><path d="M3 9 H13 L16 12 H32 V30 H3 Z" fill="#f2c230"/><path d="M3 14 H32 V30 H3 Z" fill="#ffd85a"/></svg>
<svg class="a" style="left:274px;top:954px" width="36" height="36" viewBox="0 0 36 36"><path d="M5 3 H24 L31 10 V33 H5 Z" fill="#e9e9e3" stroke="#aaa" stroke-width="1"/><path d="M22 3 L31 3 L31 10 Z" fill="#3b8fd6"/><g font-family="Liberation Mono" font-size="6" fill="#555"><text x="9" y="16">0101</text><text x="9" y="23">0110</text><text x="9" y="30">0111</text></g></svg>
<svg class="a" style="left:324px;top:954px" width="36" height="36" viewBox="0 0 36 36"><path d="M5 3 H24 L31 10 V33 H5 Z" fill="#e9e9e3" stroke="#aaa" stroke-width="1"/><path d="M22 3 L31 3 L31 10 Z" fill="#3b8fd6"/><path d="M8 8 L28 30 M28 8 L8 30" stroke="#222" stroke-width="3.5"/></svg>
<svg class="a" style="left:374px;top:954px" width="36" height="36" viewBox="0 0 36 36"><path d="M5 3 H24 L31 10 V33 H5 Z" fill="#e9e9e3" stroke="#aaa" stroke-width="1"/><path d="M26 20 A9 9 0 1 1 18 11" fill="none" stroke="#1b5fb4" stroke-width="3.5"/><path d="M16 5 L24 11 L16 16 Z" fill="#1b5fb4"/></svg>
<svg class="a" style="left:438px;top:954px" width="36" height="36" viewBox="0 0 36 36"><circle cx="15" cy="14" r="9" fill="none" stroke="#fff" stroke-width="3"/><circle cx="15" cy="14" r="6" fill="#333"/><path d="M21 21 L29 31" stroke="#fff" stroke-width="4.5" stroke-linecap="round"/></svg>
<svg class="a" style="left:488px;top:954px" width="36" height="36" viewBox="0 0 36 36"><path d="M3 18 L15 7 V13 H31 V23 H15 V29 Z" fill="#7ec42d" stroke="#c8f08a" stroke-width="1.5" stroke-linejoin="round"/></svg>
<svg class="a" style="left:538px;top:954px" width="36" height="36" viewBox="0 0 36 36"><path d="M33 18 L21 7 V13 H5 V23 H21 V29 Z" fill="#7ec42d" stroke="#c8f08a" stroke-width="1.5" stroke-linejoin="round"/></svg>
<svg class="a" style="left:588px;top:954px" width="36" height="36" viewBox="0 0 36 36"><g fill="#e8e8e8"><rect x="4" y="18" width="30" height="3"/><rect x="4" y="24" width="30" height="3"/><rect x="4" y="30" width="30" height="3"/></g><path d="M30 12 L21 4 V9 H4 V16 H21 V21 Z" fill="#7ec42d" stroke="#c8f08a" stroke-width="1.2"/><rect x="26" y="12" width="8" height="6" fill="#f2d24b"/></svg>
<svg class="a" style="left:638px;top:954px" width="36" height="36" viewBox="0 0 36 36"><path d="M6 3 H30" stroke="#888" stroke-width="2"/><path d="M18 5 L29 17 H23 V32 H13 V17 H7 Z" fill="#7ec42d" stroke="#c8f08a" stroke-width="1.5" stroke-linejoin="round"/></svg>
<svg class="a" style="left:688px;top:954px" width="36" height="36" viewBox="0 0 36 36"><path d="M6 33 H30" stroke="#888" stroke-width="2"/><path d="M18 31 L29 19 H23 V4 H13 V19 H7 Z" fill="#7ec42d" stroke="#c8f08a" stroke-width="1.5" stroke-linejoin="round"/></svg>
<svg class="a" style="left:739px;top:954px" width="36" height="36" viewBox="0 0 36 36"><rect x="4" y="6" width="28" height="24" fill="#e6e6e6"/><g stroke="#bbb" stroke-width="1.5"><path d="M4 12 H32 M4 18 H32 M4 24 H32"/></g><path d="M12 24 H26 L19 32 Z" fill="#3a72c4"/></svg>
<svg class="a" style="left:802px;top:954px" width="36" height="36" viewBox="0 0 36 36"><rect x="4" y="6" width="28" height="24" fill="#f0f0f0"/><path d="M4 11 H32" stroke="#d22" stroke-width="2"/><path d="M4 16 H32" stroke="#1c4fd8" stroke-width="2"/><path d="M4 21 H32" stroke="#6b3fa0" stroke-width="2"/><path d="M4 26 H32" stroke="#333" stroke-width="2"/></svg>
<svg class="a" style="left:865px;top:954px" width="36" height="36" viewBox="0 0 36 36"><circle cx="14" cy="14" r="10" fill="none" stroke="#fff" stroke-width="3"/><path d="M9 14 H19 M14 9 V19" stroke="#fff" stroke-width="2.8"/><path d="M21 21 L30 30" stroke="#fff" stroke-width="4.5" stroke-linecap="round"/></svg>
<svg class="a" style="left:915px;top:954px" width="36" height="36" viewBox="0 0 36 36"><circle cx="14" cy="14" r="10" fill="none" stroke="#fff" stroke-width="3"/><path d="M9 14 H19" stroke="#fff" stroke-width="2.8"/><path d="M21 21 L30 30" stroke="#fff" stroke-width="4.5" stroke-linecap="round"/></svg>
<svg class="a" style="left:966px;top:954px" width="36" height="36" viewBox="0 0 36 36"><circle cx="14" cy="14" r="10" fill="none" stroke="#fff" stroke-width="3"/><path d="M9 12 H19 M9 16.5 H19" stroke="#fff" stroke-width="2.4"/><path d="M21 21 L30 30" stroke="#fff" stroke-width="4.5" stroke-linecap="round"/></svg>
<svg class="a" style="left:1016px;top:954px" width="36" height="36" viewBox="0 0 36 36"><rect x="5" y="5" width="28" height="27" fill="#e4e4e4"/><g stroke="#999" stroke-width="1"><path d="M5 12 H33 M5 19 H33 M5 26 H33 M14 5 V32 M24 5 V32"/></g><path d="M5 8 L14 18 L5 28 Z M33 8 L24 18 L33 28 Z" fill="#2e64b8"/></svg>
<svg class="a" style="left:1066px;top:954px" width="36" height="36" viewBox="0 0 36 36"><rect x="4" y="3" width="29" height="30" fill="#e6e6e6" stroke="#aaa" stroke-width="1"/><path d="M4 17 H33 M18.5 17 V33" stroke="#999" stroke-width="1"/><g font-family="Liberation Sans" font-size="8" fill="#444" text-anchor="middle"><text x="18.5" y="12">1</text><text x="11" y="28">2</text><text x="26" y="28">3</text></g></svg>

<div class="a" style="left:211px;top:956px;width:1px;height:32px;background:#333"></div>
<div class="a" style="left:424px;top:956px;width:1px;height:32px;background:#333"></div>
<div class="a" style="left:787px;top:956px;width:1px;height:32px;background:#333"></div>
<div class="a" style="left:852px;top:956px;width:1px;height:32px;background:#333"></div>
<div class="a" style="left:0;top:1003.5px;width:1502px;height:1.5px;background:#3c3c3c"></div>
<div class="a" style="left:4px;top:1012px;width:1422px;height:39px;background:#2b2b2b;border:2px solid #0d0d0d;border-radius:7px"></div>
<div class="a" style="left:38px;top:1014px;width:2px;height:35px;background:#0d0d0d"></div>
<svg class="a" style="left:12px;top:1018px" width="20" height="30" viewBox="0 0 20 30"><path d="M2 2 H18 V28 L10 21 L2 28 Z" fill="#79a6dc"/></svg>
<div class="a nw" style="left:48px;top:1019px;font-size:24px;line-height:30px;color:#8e8e8e">Примените фильтр отображения ... &lt;Ctrl-/&gt;</div>
<div class="a" style="left:1340px;top:1018px;width:48px;height:28px;background:#6fa0d8;border-radius:6px"></div>
<svg class="a" style="left:1346px;top:1021px" width="36" height="22" viewBox="0 0 36 22"><path d="M3 8 H21 V3 L33 11 L21 19 V14 H3 Z" fill="#111" stroke="#111" stroke-width="1.5" stroke-linejoin="round"/></svg>
<svg class="a" style="left:1401px;top:1026px" width="16" height="12" viewBox="0 0 16 12"><path d="M1 2 H15 L8 10 Z" fill="#b8b8b8"/></svg>
<svg class="a" style="left:1439px;top:1022px" width="20" height="20" viewBox="0 0 20 20"><path d="M10 2 V18 M2 10 H18" stroke="#e6e6e6" stroke-width="4"/></svg>
<div class="a" style="left:0;top:1058.5px;width:1502px;height:1.5px;background:#3c3c3c"></div>
<div class="a" style="left:0;top:1064px;width:1410px;height:43px;background:#484848;border-bottom:3px solid #141414"></div>
<div class="a" style="left:124px;top:1064px;width:2px;height:41px;background:#383838"></div>
<div class="a" style="left:324px;top:1064px;width:2px;height:41px;background:#383838"></div>
<div class="a" style="left:624px;top:1064px;width:2px;height:41px;background:#383838"></div>
<div class="a" style="left:924px;top:1064px;width:2px;height:41px;background:#383838"></div>
<div class="a" style="left:1038px;top:1064px;width:2px;height:41px;background:#383838"></div>
<div class="a" style="left:1124px;top:1064px;width:2px;height:41px;background:#383838"></div>
<div class="a nw" style="left:3px;top:1074px;font-size:25px;line-height:30px;color:#fafafa">No.</div>
<div class="a nw" style="left:132px;top:1074px;font-size:25px;line-height:30px;color:#fafafa">Time</div>
<div class="a nw" style="left:332px;top:1074px;font-size:25px;line-height:30px;color:#fafafa">Source</div>
<div class="a nw" style="left:632px;top:1074px;font-size:25px;line-height:30px;color:#fafafa">Destination</div>
<div class="a nw" style="left:932px;top:1074px;font-size:25px;line-height:30px;color:#fafafa">Protocol</div>
<div class="a nw" style="left:1046px;top:1074px;font-size:25px;line-height:30px;color:#fafafa">Length</div>
<div class="a nw" style="left:1132px;top:1074px;font-size:25px;line-height:30px;color:#fafafa">Info</div>
<div class="a" style="left:0;top:1107px;width:1410px;height:471px;background:#daedfd"></div>
<div class="a" style="left:14px;top:1108px;width:2px;height:470px;background:repeating-linear-gradient(#1a1a1a 0 9px,rgba(0,0,0,0) 9px 13px)"></div>
<div class="a" style="left:1410px;top:1064px;width:1.5px;height:514px;background:#8a8a8a"></div>
<div class="a" style="left:1411.5px;top:1065px;width:60px;height:513px;background:#daedfd"></div>
<div class="a" style="left:1411px;top:1081px;width:61px;height:6px;background:#e4e3fb"></div><div class="a" style="left:1411px;top:1095px;width:61px;height:35px;background:#e4e3fb"></div><div class="a" style="left:1411px;top:1153px;width:61px;height:14px;background:#e4e3fb"></div><div class="a" style="left:1411px;top:1176px;width:61px;height:35px;background:#e4e3fb"></div><div class="a" style="left:1411px;top:1238px;width:61px;height:14px;background:#e4e3fb"></div><div class="a" style="left:1411px;top:1263px;width:61px;height:35px;background:#e4e3fb"></div><div class="a" style="left:1411px;top:1329px;width:61px;height:11px;background:#e4e3fb"></div><div class="a" style="left:1411px;top:1343px;width:61px;height:35px;background:#e4e3fb"></div><div class="a" style="left:1411px;top:1399px;width:61px;height:16px;background:#e4e3fb"></div><div class="a" style="left:1411px;top:1424px;width:61px;height:36px;background:#e4e3fb"></div><div class="a" style="left:1411px;top:1493px;width:61px;height:6px;background:#e4e3fb"></div><div class="a" style="left:1411px;top:1507px;width:61px;height:35px;background:#e4e3fb"></div>
<div class="a" style="left:1471.5px;top:1064px;width:29px;height:514px;background:#434343"></div>
<div class="a" style="left:1473px;top:1065px;width:26px;height:24px;background:#4d4d4d;border:1px solid #5a5a5a"></div>
<svg class="a" style="left:1477px;top:1069px" width="18" height="14" viewBox="0 0 18 14"><path d="M2 11 L9 3 L16 11 Z" fill="#b0b0b0"/></svg>
<div class="a" style="left:1500.5px;top:846px;width:5px;height:732px;background:#6a6a6a"></div>
<div class="a nw mono" style="left:3px;top:1111.5px;width:121px;text-align:right;font-size:23.9px;line-height:28px;color:#12272e;-webkit-text-stroke:0.3px #12272e">3897</div><div class="a nw mono" style="left:133px;top:1111.5px;font-size:23.9px;line-height:28px;color:#12272e;-webkit-text-stroke:0.3px #12272e">82.767952</div><div class="a nw mono" style="left:332px;top:1111.5px;font-size:23.9px;line-height:28px;color:#12272e;-webkit-text-stroke:0.3px #12272e">127.0.0.1</div><div class="a nw mono" style="left:632px;top:1111.5px;font-size:23.9px;line-height:28px;color:#12272e;-webkit-text-stroke:0.3px #12272e">127.0.0.1</div><div class="a nw mono" style="left:932px;top:1111.5px;font-size:23.9px;line-height:28px;color:#12272e;-webkit-text-stroke:0.3px #12272e">UDP</div><div class="a nw mono" style="left:1003px;top:1111.5px;width:121px;text-align:right;font-size:23.9px;line-height:28px;color:#12272e;-webkit-text-stroke:0.3px #12272e">52</div><div class="a nw mono" style="left:1133px;top:1111.5px;font-size:23.9px;line-height:28px;color:#12272e;-webkit-text-stroke:0.3px #12272e">63593 &nbsp; 5151 Len=…</div>
<div class="a nw mono" style="left:3px;top:1143.5px;width:121px;text-align:right;font-size:23.9px;line-height:28px;color:#12272e;-webkit-text-stroke:0.3px #12272e">3898</div><div class="a nw mono" style="left:133px;top:1143.5px;font-size:23.9px;line-height:28px;color:#12272e;-webkit-text-stroke:0.3px #12272e">82.874913</div><div class="a nw mono" style="left:332px;top:1143.5px;font-size:23.9px;line-height:28px;color:#12272e;-webkit-text-stroke:0.3px #12272e">127.0.0.1</div><div class="a nw mono" style="left:632px;top:1143.5px;font-size:23.9px;line-height:28px;color:#12272e;-webkit-text-stroke:0.3px #12272e">127.0.0.1</div><div class="a nw mono" style="left:932px;top:1143.5px;font-size:23.9px;line-height:28px;color:#12272e;-webkit-text-stroke:0.3px #12272e">UDP</div><div class="a nw mono" style="left:1003px;top:1143.5px;width:121px;text-align:right;font-size:23.9px;line-height:28px;color:#12272e;-webkit-text-stroke:0.3px #12272e">52</div><div class="a nw mono" style="left:1133px;top:1143.5px;font-size:23.9px;line-height:28px;color:#12272e;-webkit-text-stroke:0.3px #12272e">50062 &nbsp; 5150 Len=…</div>
<div class="a nw mono" style="left:3px;top:1175.5px;width:121px;text-align:right;font-size:23.9px;line-height:28px;color:#12272e;-webkit-text-stroke:0.3px #12272e">3899</div><div class="a nw mono" style="left:133px;top:1175.5px;font-size:23.9px;line-height:28px;color:#12272e;-webkit-text-stroke:0.3px #12272e">82.910108</div><div class="a nw mono" style="left:332px;top:1175.5px;font-size:23.9px;line-height:28px;color:#12272e;-webkit-text-stroke:0.3px #12272e">127.0.0.1</div><div class="a nw mono" style="left:632px;top:1175.5px;font-size:23.9px;line-height:28px;color:#12272e;-webkit-text-stroke:0.3px #12272e">127.0.0.1</div><div class="a nw mono" style="left:932px;top:1175.5px;font-size:23.9px;line-height:28px;color:#12272e;-webkit-text-stroke:0.3px #12272e">UDP</div><div class="a nw mono" style="left:1003px;top:1175.5px;width:121px;text-align:right;font-size:23.9px;line-height:28px;color:#12272e;-webkit-text-stroke:0.3px #12272e">52</div><div class="a nw mono" style="left:1133px;top:1175.5px;font-size:23.9px;line-height:28px;color:#12272e;-webkit-text-stroke:0.3px #12272e">63593 &nbsp; 5151 Len=…</div>
<div class="a nw mono" style="left:3px;top:1207.5px;width:121px;text-align:right;font-size:23.9px;line-height:28px;color:#12272e;-webkit-text-stroke:0.3px #12272e">3900</div><div class="a nw mono" style="left:133px;top:1207.5px;font-size:23.9px;line-height:28px;color:#12272e;-webkit-text-stroke:0.3px #12272e">82.917770</div><div class="a nw mono" style="left:332px;top:1207.5px;font-size:23.9px;line-height:28px;color:#12272e;-webkit-text-stroke:0.3px #12272e">127.0.0.1</div><div class="a nw mono" style="left:632px;top:1207.5px;font-size:23.9px;line-height:28px;color:#12272e;-webkit-text-stroke:0.3px #12272e">127.0.0.1</div><div class="a nw mono" style="left:932px;top:1207.5px;font-size:23.9px;line-height:28px;color:#12272e;-webkit-text-stroke:0.3px #12272e">UDP</div><div class="a nw mono" style="left:1003px;top:1207.5px;width:121px;text-align:right;font-size:23.9px;line-height:28px;color:#12272e;-webkit-text-stroke:0.3px #12272e">52</div><div class="a nw mono" style="left:1133px;top:1207.5px;font-size:23.9px;line-height:28px;color:#12272e;-webkit-text-stroke:0.3px #12272e">50062 &nbsp; 5150 Len=…</div>
<div class="a nw mono" style="left:3px;top:1239.5px;width:121px;text-align:right;font-size:23.9px;line-height:28px;color:#12272e;-webkit-text-stroke:0.3px #12272e">3901</div><div class="a nw mono" style="left:133px;top:1239.5px;font-size:23.9px;line-height:28px;color:#12272e;-webkit-text-stroke:0.3px #12272e">82.919025</div><div class="a nw mono" style="left:332px;top:1239.5px;font-size:23.9px;line-height:28px;color:#12272e;-webkit-text-stroke:0.3px #12272e">127.0.0.1</div><div class="a nw mono" style="left:632px;top:1239.5px;font-size:23.9px;line-height:28px;color:#12272e;-webkit-text-stroke:0.3px #12272e">127.0.0.1</div><div class="a nw mono" style="left:932px;top:1239.5px;font-size:23.9px;line-height:28px;color:#12272e;-webkit-text-stroke:0.3px #12272e">UDP</div><div class="a nw mono" style="left:1003px;top:1239.5px;width:121px;text-align:right;font-size:23.9px;line-height:28px;color:#12272e;-webkit-text-stroke:0.3px #12272e">52</div><div class="a nw mono" style="left:1133px;top:1239.5px;font-size:23.9px;line-height:28px;color:#12272e;-webkit-text-stroke:0.3px #12272e">63593 &nbsp; 5151 Len=…</div>
<div class="a nw mono" style="left:3px;top:1271.5px;width:121px;text-align:right;font-size:23.9px;line-height:28px;color:#12272e;-webkit-text-stroke:0.3px #12272e">3902</div><div class="a nw mono" style="left:133px;top:1271.5px;font-size:23.9px;line-height:28px;color:#12272e;-webkit-text-stroke:0.3px #12272e">82.995571</div><div class="a nw mono" style="left:332px;top:1271.5px;font-size:23.9px;line-height:28px;color:#12272e;-webkit-text-stroke:0.3px #12272e">127.0.0.1</div><div class="a nw mono" style="left:632px;top:1271.5px;font-size:23.9px;line-height:28px;color:#12272e;-webkit-text-stroke:0.3px #12272e">127.0.0.1</div><div class="a nw mono" style="left:932px;top:1271.5px;font-size:23.9px;line-height:28px;color:#12272e;-webkit-text-stroke:0.3px #12272e">UDP</div><div class="a nw mono" style="left:1003px;top:1271.5px;width:121px;text-align:right;font-size:23.9px;line-height:28px;color:#12272e;-webkit-text-stroke:0.3px #12272e">52</div><div class="a nw mono" style="left:1133px;top:1271.5px;font-size:23.9px;line-height:28px;color:#12272e;-webkit-text-stroke:0.3px #12272e">50062 &nbsp; 5150 Len=…</div>
<div class="a nw mono" style="left:3px;top:1303.5px;width:121px;text-align:right;font-size:23.9px;line-height:28px;color:#12272e;-webkit-text-stroke:0.3px #12272e">3903</div><div class="a nw mono" style="left:133px;top:1303.5px;font-size:23.9px;line-height:28px;color:#12272e;-webkit-text-stroke:0.3px #12272e">82.995784</div><div class="a nw mono" style="left:332px;top:1303.5px;font-size:23.9px;line-height:28px;color:#12272e;-webkit-text-stroke:0.3px #12272e">127.0.0.1</div><div class="a nw mono" style="left:632px;top:1303.5px;font-size:23.9px;line-height:28px;color:#12272e;-webkit-text-stroke:0.3px #12272e">127.0.0.1</div><div class="a nw mono" style="left:932px;top:1303.5px;font-size:23.9px;line-height:28px;color:#12272e;-webkit-text-stroke:0.3px #12272e">UDP</div><div class="a nw mono" style="left:1003px;top:1303.5px;width:121px;text-align:right;font-size:23.9px;line-height:28px;color:#12272e;-webkit-text-stroke:0.3px #12272e">52</div><div class="a nw mono" style="left:1133px;top:1303.5px;font-size:23.9px;line-height:28px;color:#12272e;-webkit-text-stroke:0.3px #12272e">63593 &nbsp; 5151 Len=…</div>
<div class="a nw mono" style="left:3px;top:1335.5px;width:121px;text-align:right;font-size:23.9px;line-height:28px;color:#12272e;-webkit-text-stroke:0.3px #12272e">3904</div><div class="a nw mono" style="left:133px;top:1335.5px;font-size:23.9px;line-height:28px;color:#12272e;-webkit-text-stroke:0.3px #12272e">83.071587</div><div class="a nw mono" style="left:332px;top:1335.5px;font-size:23.9px;line-height:28px;color:#12272e;-webkit-text-stroke:0.3px #12272e">127.0.0.1</div><div class="a nw mono" style="left:632px;top:1335.5px;font-size:23.9px;line-height:28px;color:#12272e;-webkit-text-stroke:0.3px #12272e">127.0.0.1</div><div class="a nw mono" style="left:932px;top:1335.5px;font-size:23.9px;line-height:28px;color:#12272e;-webkit-text-stroke:0.3px #12272e">UDP</div><div class="a nw mono" style="left:1003px;top:1335.5px;width:121px;text-align:right;font-size:23.9px;line-height:28px;color:#12272e;-webkit-text-stroke:0.3px #12272e">52</div><div class="a nw mono" style="left:1133px;top:1335.5px;font-size:23.9px;line-height:28px;color:#12272e;-webkit-text-stroke:0.3px #12272e">50062 &nbsp; 5150 Len=…</div>
<div class="a nw mono" style="left:3px;top:1367.5px;width:121px;text-align:right;font-size:23.9px;line-height:28px;color:#12272e;-webkit-text-stroke:0.3px #12272e">3905</div><div class="a nw mono" style="left:133px;top:1367.5px;font-size:23.9px;line-height:28px;color:#12272e;-webkit-text-stroke:0.3px #12272e">83.074655</div><div class="a nw mono" style="left:332px;top:1367.5px;font-size:23.9px;line-height:28px;color:#12272e;-webkit-text-stroke:0.3px #12272e">127.0.0.1</div><div class="a nw mono" style="left:632px;top:1367.5px;font-size:23.9px;line-height:28px;color:#12272e;-webkit-text-stroke:0.3px #12272e">127.0.0.1</div><div class="a nw mono" style="left:932px;top:1367.5px;font-size:23.9px;line-height:28px;color:#12272e;-webkit-text-stroke:0.3px #12272e">UDP</div><div class="a nw mono" style="left:1003px;top:1367.5px;width:121px;text-align:right;font-size:23.9px;line-height:28px;color:#12272e;-webkit-text-stroke:0.3px #12272e">52</div><div class="a nw mono" style="left:1133px;top:1367.5px;font-size:23.9px;line-height:28px;color:#12272e;-webkit-text-stroke:0.3px #12272e">63593 &nbsp; 5151 Len=…</div>
<div class="a nw mono" style="left:3px;top:1399.5px;width:121px;text-align:right;font-size:23.9px;line-height:28px;color:#12272e;-webkit-text-stroke:0.3px #12272e">3906</div><div class="a nw mono" style="left:133px;top:1399.5px;font-size:23.9px;line-height:28px;color:#12272e;-webkit-text-stroke:0.3px #12272e">83.147924</div><div class="a nw mono" style="left:332px;top:1399.5px;font-size:23.9px;line-height:28px;color:#12272e;-webkit-text-stroke:0.3px #12272e">127.0.0.1</div><div class="a nw mono" style="left:632px;top:1399.5px;font-size:23.9px;line-height:28px;color:#12272e;-webkit-text-stroke:0.3px #12272e">127.0.0.1</div><div class="a nw mono" style="left:932px;top:1399.5px;font-size:23.9px;line-height:28px;color:#12272e;-webkit-text-stroke:0.3px #12272e">UDP</div><div class="a nw mono" style="left:1003px;top:1399.5px;width:121px;text-align:right;font-size:23.9px;line-height:28px;color:#12272e;-webkit-text-stroke:0.3px #12272e">52</div><div class="a nw mono" style="left:1133px;top:1399.5px;font-size:23.9px;line-height:28px;color:#12272e;-webkit-text-stroke:0.3px #12272e">50062 &nbsp; 5150 Len=…</div>
<div class="a nw mono" style="left:3px;top:1431.5px;width:121px;text-align:right;font-size:23.9px;line-height:28px;color:#12272e;-webkit-text-stroke:0.3px #12272e">3907</div><div class="a nw mono" style="left:133px;top:1431.5px;font-size:23.9px;line-height:28px;color:#12272e;-webkit-text-stroke:0.3px #12272e">83.148251</div><div class="a nw mono" style="left:332px;top:1431.5px;font-size:23.9px;line-height:28px;color:#12272e;-webkit-text-stroke:0.3px #12272e">127.0.0.1</div><div class="a nw mono" style="left:632px;top:1431.5px;font-size:23.9px;line-height:28px;color:#12272e;-webkit-text-stroke:0.3px #12272e">127.0.0.1</div><div class="a nw mono" style="left:932px;top:1431.5px;font-size:23.9px;line-height:28px;color:#12272e;-webkit-text-stroke:0.3px #12272e">UDP</div><div class="a nw mono" style="left:1003px;top:1431.5px;width:121px;text-align:right;font-size:23.9px;line-height:28px;color:#12272e;-webkit-text-stroke:0.3px #12272e">52</div><div class="a nw mono" style="left:1133px;top:1431.5px;font-size:23.9px;line-height:28px;color:#12272e;-webkit-text-stroke:0.3px #12272e">63593 &nbsp; 5151 Len=…</div>
<div class="a nw mono" style="left:3px;top:1463.5px;width:121px;text-align:right;font-size:23.9px;line-height:28px;color:#12272e;-webkit-text-stroke:0.3px #12272e">3908</div><div class="a nw mono" style="left:133px;top:1463.5px;font-size:23.9px;line-height:28px;color:#12272e;-webkit-text-stroke:0.3px #12272e">83.238350</div><div class="a nw mono" style="left:332px;top:1463.5px;font-size:23.9px;line-height:28px;color:#12272e;-webkit-text-stroke:0.3px #12272e">127.0.0.1</div><div class="a nw mono" style="left:632px;top:1463.5px;font-size:23.9px;line-height:28px;color:#12272e;-webkit-text-stroke:0.3px #12272e">127.0.0.1</div><div class="a nw mono" style="left:932px;top:1463.5px;font-size:23.9px;line-height:28px;color:#12272e;-webkit-text-stroke:0.3px #12272e">UDP</div><div class="a nw mono" style="left:1003px;top:1463.5px;width:121px;text-align:right;font-size:23.9px;line-height:28px;color:#12272e;-webkit-text-stroke:0.3px #12272e">52</div><div class="a nw mono" style="left:1133px;top:1463.5px;font-size:23.9px;line-height:28px;color:#12272e;-webkit-text-stroke:0.3px #12272e">50062 &nbsp; 5150 Len=…</div>
<div class="a nw mono" style="left:3px;top:1495.5px;width:121px;text-align:right;font-size:23.9px;line-height:28px;color:#12272e;-webkit-text-stroke:0.3px #12272e">3909</div><div class="a nw mono" style="left:133px;top:1495.5px;font-size:23.9px;line-height:28px;color:#12272e;-webkit-text-stroke:0.3px #12272e">83.238631</div><div class="a nw mono" style="left:332px;top:1495.5px;font-size:23.9px;line-height:28px;color:#12272e;-webkit-text-stroke:0.3px #12272e">127.0.0.1</div><div class="a nw mono" style="left:632px;top:1495.5px;font-size:23.9px;line-height:28px;color:#12272e;-webkit-text-stroke:0.3px #12272e">127.0.0.1</div><div class="a nw mono" style="left:932px;top:1495.5px;font-size:23.9px;line-height:28px;color:#12272e;-webkit-text-stroke:0.3px #12272e">UDP</div><div class="a nw mono" style="left:1003px;top:1495.5px;width:121px;text-align:right;font-size:23.9px;line-height:28px;color:#12272e;-webkit-text-stroke:0.3px #12272e">52</div><div class="a nw mono" style="left:1133px;top:1495.5px;font-size:23.9px;line-height:28px;color:#12272e;-webkit-text-stroke:0.3px #12272e">63593 &nbsp; 5151 Len=…</div>
<div class="a nw mono" style="left:3px;top:1527.5px;width:121px;text-align:right;font-size:23.9px;line-height:28px;color:#12272e;-webkit-text-stroke:0.3px #12272e">3910</div><div class="a nw mono" style="left:133px;top:1527.5px;font-size:23.9px;line-height:28px;color:#12272e;-webkit-text-stroke:0.3px #12272e">83.313154</div><div class="a nw mono" style="left:332px;top:1527.5px;font-size:23.9px;line-height:28px;color:#12272e;-webkit-text-stroke:0.3px #12272e">127.0.0.1</div><div class="a nw mono" style="left:632px;top:1527.5px;font-size:23.9px;line-height:28px;color:#12272e;-webkit-text-stroke:0.3px #12272e">127.0.0.1</div><div class="a nw mono" style="left:932px;top:1527.5px;font-size:23.9px;line-height:28px;color:#12272e;-webkit-text-stroke:0.3px #12272e">UDP</div><div class="a nw mono" style="left:1003px;top:1527.5px;width:121px;text-align:right;font-size:23.9px;line-height:28px;color:#12272e;-webkit-text-stroke:0.3px #12272e">52</div><div class="a nw mono" style="left:1133px;top:1527.5px;font-size:23.9px;line-height:28px;color:#12272e;-webkit-text-stroke:0.3px #12272e">50062 &nbsp; 5150 Len=…</div>
<div class="a nw mono" style="left:3px;top:1559.5px;width:121px;text-align:right;font-size:23.9px;line-height:28px;color:#12272e;-webkit-text-stroke:0.3px #12272e">3911</div><div class="a nw mono" style="left:133px;top:1559.5px;font-size:23.9px;line-height:28px;color:#12272e;-webkit-text-stroke:0.3px #12272e">83.313392</div><div class="a nw mono" style="left:332px;top:1559.5px;font-size:23.9px;line-height:28px;color:#12272e;-webkit-text-stroke:0.3px #12272e">127.0.0.1</div><div class="a nw mono" style="left:632px;top:1559.5px;font-size:23.9px;line-height:28px;color:#12272e;-webkit-text-stroke:0.3px #12272e">127.0.0.1</div><div class="a nw mono" style="left:932px;top:1559.5px;font-size:23.9px;line-height:28px;color:#12272e;-webkit-text-stroke:0.3px #12272e">UDP</div><div class="a nw mono" style="left:1003px;top:1559.5px;width:121px;text-align:right;font-size:23.9px;line-height:28px;color:#12272e;-webkit-text-stroke:0.3px #12272e">52</div><div class="a nw mono" style="left:1133px;top:1559.5px;font-size:23.9px;line-height:28px;color:#12272e;-webkit-text-stroke:0.3px #12272e">63593 &nbsp; 5151 Len=…</div>

<svg class="a" style="left:1218px;top:1119.0px" width="17" height="12" viewBox="0 0 17 12"><path d="M1.5 6 H14.5 M9.5 1.5 L14.5 6 L9.5 10.5" fill="none" stroke="#12272e" stroke-width="2"/></svg><svg class="a" style="left:1218px;top:1151.0px" width="17" height="12" viewBox="0 0 17 12"><path d="M1.5 6 H14.5 M9.5 1.5 L14.5 6 L9.5 10.5" fill="none" stroke="#12272e" stroke-width="2"/></svg><svg class="a" style="left:1218px;top:1183.0px" width="17" height="12" viewBox="0 0 17 12"><path d="M1.5 6 H14.5 M9.5 1.5 L14.5 6 L9.5 10.5" fill="none" stroke="#12272e" stroke-width="2"/></svg><svg class="a" style="left:1218px;top:1215.0px" width="17" height="12" viewBox="0 0 17 12"><path d="M1.5 6 H14.5 M9.5 1.5 L14.5 6 L9.5 10.5" fill="none" stroke="#12272e" stroke-width="2"/></svg><svg class="a" style="left:1218px;top:1247.0px" width="17" height="12" viewBox="0 0 17 12"><path d="M1.5 6 H14.5 M9.5 1.5 L14.5 6 L9.5 10.5" fill="none" stroke="#12272e" stroke-width="2"/></svg><svg class="a" style="left:1218px;top:1279.0px" width="17" height="12" viewBox="0 0 17 12"><path d="M1.5 6 H14.5 M9.5 1.5 L14.5 6 L9.5 10.5" fill="none" stroke="#12272e" stroke-width="2"/></svg><svg class="a" style="left:1218px;top:1311.0px" width="17" height="12" viewBox="0 0 17 12"><path d="M1.5 6 H14.5 M9.5 1.5 L14.5 6 L9.5 10.5" fill="none" stroke="#12272e" stroke-width="2"/></svg><svg class="a" style="left:1218px;top:1343.0px" width="17" height="12" viewBox="0 0 17 12"><path d="M1.5 6 H14.5 M9.5 1.5 L14.5 6 L9.5 10.5" fill="none" stroke="#12272e" stroke-width="2"/></svg><svg class="a" style="left:1218px;top:1375.0px" width="17" height="12" viewBox="0 0 17 12"><path d="M1.5 6 H14.5 M9.5 1.5 L14.5 6 L9.5 10.5" fill="none" stroke="#12272e" stroke-width="2"/></svg><svg class="a" style="left:1218px;top:1407.0px" width="17" height="12" viewBox="0 0 17 12"><path d="M1.5 6 H14.5 M9.5 1.5 L14.5 6 L9.5 10.5" fill="none" stroke="#12272e" stroke-width="2"/></svg><svg class="a" style="left:1218px;top:1439.0px" width="17" height="12" viewBox="0 0 17 12"><path d="M1.5 6 H14.5 M9.5 1.5 L14.5 6 L9.5 10.5" fill="none" stroke="#12272e" stroke-width="2"/></svg><svg class="a" style="left:1218px;top:1471.0px" width="17" height="12" viewBox="0 0 17 12"><path d="M1.5 6 H14.5 M9.5 1.5 L14.5 6 L9.5 10.5" fill="none" stroke="#12272e" stroke-width="2"/></svg><svg class="a" style="left:1218px;top:1503.0px" width="17" height="12" viewBox="0 0 17 12"><path d="M1.5 6 H14.5 M9.5 1.5 L14.5 6 L9.5 10.5" fill="none" stroke="#12272e" stroke-width="2"/></svg><svg class="a" style="left:1218px;top:1535.0px" width="17" height="12" viewBox="0 0 17 12"><path d="M1.5 6 H14.5 M9.5 1.5 L14.5 6 L9.5 10.5" fill="none" stroke="#12272e" stroke-width="2"/></svg><svg class="a" style="left:1218px;top:1567.0px" width="17" height="12" viewBox="0 0 17 12"><path d="M1.5 6 H14.5 M9.5 1.5 L14.5 6 L9.5 10.5" fill="none" stroke="#12272e" stroke-width="2"/></svg>
</body></html>
